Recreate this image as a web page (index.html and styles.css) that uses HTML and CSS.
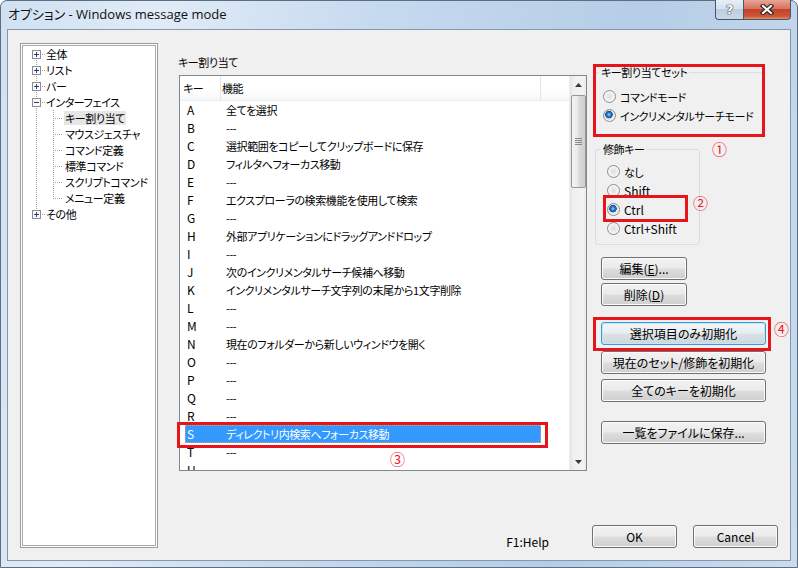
FILE: index.html
```html
<!doctype html>

<html lang="ja">
<head>
  <meta charset="utf-8">

  <title>オプション - Windows message mode</title>

  <link rel="stylesheet" href="styles.css">
</head>

<body>
  <div class="window">
    <div class="titlebar">
      <span class="title">オプション - Windows message mode</span>
      <div class="caption">
        <div class="cap cap-help"><span>?</span></div>
        <div class="cap cap-close">
          <svg width="14" height="11" viewBox="0 0 14 11">
            <path d="M3 2L11 9M11 2L3 9" stroke="#2b2b2b" stroke-width="4.4" stroke-linecap="square" fill="none"/>
            <path d="M3 2L11 9M11 2L3 9" stroke="#fff" stroke-width="2" stroke-linecap="square" fill="none"/>
          </svg>
        </div>
      </div>
    </div>

    <div class="client">
      <div class="tree">
        <div class="tree-body">
          <div class="node"><span class="g g-first"><svg class="box" width="9" height="9"><rect x="0.5" y="0.5" width="8" height="8" fill="#fafafa" stroke="#8e8e8e"/><path d="M2 4.5h5M4.5 2v5" stroke="#1f3f8f"/></svg></span><span class="label">全体</span></div>
          <div class="node"><span class="g g-mid"><svg class="box" width="9" height="9"><rect x="0.5" y="0.5" width="8" height="8" fill="#fafafa" stroke="#8e8e8e"/><path d="M2 4.5h5M4.5 2v5" stroke="#1f3f8f"/></svg></span><span class="label">リスト</span></div>
          <div class="node"><span class="g g-mid"><svg class="box" width="9" height="9"><rect x="0.5" y="0.5" width="8" height="8" fill="#fafafa" stroke="#8e8e8e"/><path d="M2 4.5h5M4.5 2v5" stroke="#1f3f8f"/></svg></span><span class="label">バー</span></div>
          <div class="node"><span class="g g-mid"><svg class="box" width="9" height="9"><rect x="0.5" y="0.5" width="8" height="8" fill="#fafafa" stroke="#8e8e8e"/><path d="M2 4.5h5" stroke="#1f3f8f"/></svg></span><span class="label">インターフェイス</span></div>
          <div class="node"><span class="g g-pass"></span><span class="g2 g2-mid"></span><span class="label selected">キー割り当て</span></div>
          <div class="node"><span class="g g-pass"></span><span class="g2 g2-mid"></span><span class="label">マウスジェスチャ</span></div>
          <div class="node"><span class="g g-pass"></span><span class="g2 g2-mid"></span><span class="label">コマンド定義</span></div>
          <div class="node"><span class="g g-pass"></span><span class="g2 g2-mid"></span><span class="label">標準コマンド</span></div>
          <div class="node"><span class="g g-pass"></span><span class="g2 g2-mid"></span><span class="label">スクリプトコマンド</span></div>
          <div class="node"><span class="g g-pass"></span><span class="g2 g2-last"></span><span class="label">メニュー定義</span></div>
          <div class="node"><span class="g g-last"><svg class="box" width="9" height="9"><rect x="0.5" y="0.5" width="8" height="8" fill="#fafafa" stroke="#8e8e8e"/><path d="M2 4.5h5M4.5 2v5" stroke="#1f3f8f"/></svg></span><span class="label">その他</span></div>
        </div>
      </div>

      <div class="content">
        <div class="top">
          <div class="main">
            <div class="section-label">キー割り当て</div>
            <div class="list">
              <div class="list-main">
                <div class="list-head">
                  <span class="th th-key">キー</span>
                  <span class="th th-func">機能</span>
                  <span class="th th-rest"></span>
                </div>
                <div class="rows">
                  <div class="row"><span class="key">A</span><span>全てを選択</span></div>
                  <div class="row"><span class="key">B</span><span>---</span></div>
                  <div class="row"><span class="key">C</span><span>選択範囲をコピーしてクリップボードに保存</span></div>
                  <div class="row"><span class="key">D</span><span>フィルタへフォーカス移動</span></div>
                  <div class="row"><span class="key">E</span><span>---</span></div>
                  <div class="row"><span class="key">F</span><span>エクスプローラの検索機能を使用して検索</span></div>
                  <div class="row"><span class="key">G</span><span>---</span></div>
                  <div class="row"><span class="key">H</span><span>外部アプリケーションにドラッグアンドドロップ</span></div>
                  <div class="row"><span class="key">I</span><span>---</span></div>
                  <div class="row"><span class="key">J</span><span>次のインクリメンタルサーチ候補へ移動</span></div>
                  <div class="row"><span class="key">K</span><span>インクリメンタルサーチ文字列の末尾から1文字削除</span></div>
                  <div class="row"><span class="key">L</span><span>---</span></div>
                  <div class="row"><span class="key">M</span><span>---</span></div>
                  <div class="row"><span class="key">N</span><span>現在のフォルダーから新しいウィンドウを開く</span></div>
                  <div class="row"><span class="key">O</span><span>---</span></div>
                  <div class="row"><span class="key">P</span><span>---</span></div>
                  <div class="row"><span class="key">Q</span><span>---</span></div>
                  <div class="row"><span class="key">R</span><span>---</span></div>
                  <div class="row sel"><span class="key">S</span><span>ディレクトリ内検索へフォーカス移動</span></div>
                  <div class="row"><span class="key">T</span><span>---</span></div>
                  <div class="row"><span class="key">U</span></div>
                </div>
              </div>
              <div class="scrollbar">
                <div class="sb-btn"><svg width="7" height="4"><path d="M3.5 0L7 4H0z" fill="#3a3a3a"/></svg></div>
                <div class="sb-thumb">
                  <svg width="7" height="7"><path d="M0 0.5h7M0 2.5h7M0 4.5h7M0 6.5h7" stroke="#8a8a8a"/></svg>
                </div>
                <div class="sb-track"></div>
                <div class="sb-btn"><svg width="7" height="4"><path d="M0 0H7L3.5 4z" fill="#3a3a3a"/></svg></div>
              </div>
            </div>
          </div>

          <div class="side">
            <fieldset class="group group-set">
              <legend>キー割り当てセット</legend>
              <label class="opt"><span class="radio"></span>コマンドモード</label>
              <label class="opt"><span class="radio on"></span>インクリメンタルサーチモード</label>
            </fieldset>

            <fieldset class="group group-mod">
              <legend>修飾キー</legend>
              <label class="opt"><span class="radio"></span>なし</label>
              <label class="opt latin"><span class="radio"></span>Shift</label>
              <label class="opt latin"><span class="radio on"></span>Ctrl</label>
              <label class="opt latin"><span class="radio"></span>Ctrl+Shift</label>
            </fieldset>

            <button class="btn btn-small btn-edit">編集(<u>E</u>)...</button>
            <button class="btn btn-small btn-del">削除(<u>D</u>)</button>
            <button class="btn btn-wide btn-reset focused">選択項目のみ初期化</button>
            <button class="btn btn-wide btn-cur">現在のセット/修飾を初期化</button>
            <button class="btn btn-wide btn-all">全てのキーを初期化</button>
            <button class="btn btn-wide btn-save">一覧をファイルに保存...</button>
          </div>
        </div>

        <div class="footer">
          <span class="help-hint latin">F1:Help</span>
          <button class="btn btn-ok">OK</button>
          <button class="btn btn-cancel">Cancel</button>
        </div>
      </div>
    </div>

    <div class="mark mark-set"></div>
    <div class="mark mark-ctrl"></div>
    <div class="mark mark-row"></div>
    <div class="mark mark-reset"></div>
    <span class="num num-1">①</span>
    <span class="num num-2">②</span>
    <span class="num num-3">③</span>
    <span class="num num-4">④</span>
  </div>
</body>
</html>
```

FILE: styles.css
```css
* {
  box-sizing: border-box;
}

body {
  margin: 0;
  background: #fff;
  font-family: "Noto Sans CJK JP", sans-serif;
  font-size: 11px;
  letter-spacing: -0.4px;
  font-feature-settings: "palt";
  color: #000;
}

.latin {
  font-size: 12px;
  letter-spacing: 0;
}

.window {
  --dot-v: repeating-linear-gradient(to bottom, #a0a0a0 0 1px, transparent 1px 2px);
  --dot-h: repeating-linear-gradient(to right, #a0a0a0 0 1px, transparent 1px 2px);
  position: relative;
  width: 798px;
  height: 568px;
  border: 1px solid #5f6d7c;
  border-radius: 7px 7px 0 0;
  background: linear-gradient(100deg, #d0e1f2 0%, #e0ebf7 18%, #c6daef 42%, #b5cde7 72%, #c9dcf0 100%);
  display: flex;
  flex-direction: column;
}

/* title bar */

.titlebar {
  height: 28px;
  display: flex;
  align-items: flex-start;
  flex: none;
}

.title {
  padding-left: 7px;
  line-height: 27px;
  font-family: "Open Sans", "Noto Sans CJK JP", sans-serif;
  font-size: 13px;
  letter-spacing: 0;
  color: #101010;
}

.caption {
  margin-left: auto;
  margin-right: 6px;
  margin-top: -1px;
  display: flex;
}

.cap {
  height: 20px;
  border: 1px solid #4a5664;
  border-top: none;
  display: flex;
  align-items: center;
  justify-content: center;
}

.cap-help {
  width: 28px;
  border-right: none;
  border-radius: 0 0 0 4px;
  background: linear-gradient(#e7eef7, #d6e2ef 45%, #bccde0 50%, #c9d9ea);
}

.cap-help span {
  font-family: "DejaVu Sans", sans-serif;
  font-weight: bold;
  font-size: 13px;
  line-height: 18px;
  color: #fff;
  text-shadow: 0 0 1px #333, 0 0 1px #333, 0 0 1px #333;
}

.cap-close {
  width: 48px;
  border-radius: 0 0 4px 0;
  background: linear-gradient(#e8a597, #d8735f 45%, #c3432a 50%, #cc5537 85%, #e08e6e);
}

/* client area */

.client {
  margin: 0 6px;
  height: 532px;
  border: 1px solid #8597aa;
  background: #f0f0f0;
  display: flex;
  padding: 13px 0 0 12px;
}

.tree {
  width: 138px;
  height: 505px;
  flex: none;
  border: 1px solid #9c9c9c;
  padding: 1px;
  background: #fff;
}

.tree-body {
  height: 100%;
  border: 1px solid #a9a9a9;
  background: #fff;
  padding-left: 5px;
}

.node {
  display: flex;
  height: 16px;
  white-space: nowrap;
}

.g {
  flex: none;
  width: 17px;
  height: 16px;
}

.g2 {
  flex: none;
  width: 19px;
  height: 16px;
}

.g-first {
  background: var(--dot-v) 8px 8px / 1px 8px no-repeat, var(--dot-h) 8px 8px / 9px 1px no-repeat;
}

.g-mid {
  background: var(--dot-v) 8px 0 / 1px 16px no-repeat, var(--dot-h) 8px 8px / 9px 1px no-repeat;
}

.g-last {
  background: var(--dot-v) 8px 0 / 1px 9px no-repeat, var(--dot-h) 8px 8px / 9px 1px no-repeat;
}

.g-pass {
  background: var(--dot-v) 8px 0 / 1px 16px no-repeat;
}

.g2-mid {
  background: var(--dot-v) 8px 0 / 1px 16px no-repeat, var(--dot-h) 8px 8px / 10px 1px no-repeat;
}

.g2-last {
  background: var(--dot-v) 8px 0 / 1px 9px no-repeat, var(--dot-h) 8px 8px / 10px 1px no-repeat;
}

.box {
  display: block;
  margin: 4px 0 0 4px;
}

.label {
  height: 14px;
  line-height: 14px;
  margin-top: 1px;
  padding: 0 1px;
}

.label.selected {
  background: #e6e6e6;
}

.content {
  flex: 1;
  display: flex;
  flex-direction: column;
}

.top {
  display: flex;
  align-items: flex-start;
}

/* key list */

.main {
  margin-left: 20px;
  width: 409px;
  flex: none;
}

.section-label {
  margin-top: 12px;
  height: 14px;
  line-height: 14px;
  margin-bottom: 6px;
}

.list {
  margin-left: 1px;
  width: 408px;
  height: 396px;
  border: 1px solid #828790;
  background: #fff;
  display: flex;
}

.list-main {
  flex: 1;
  display: flex;
  flex-direction: column;
  overflow: hidden;
}

.list-head {
  display: flex;
  height: 25px;
  flex: none;
  background: linear-gradient(#fff, #fff 55%, #f6f7f9);
  border-bottom: 1px solid #eceef1;
}

.th {
  line-height: 24px;
  border-right: 1px solid #e3e5e8;
}

.th-key {
  width: 41px;
  padding-left: 3px;
}

.th-func {
  width: 320px;
  padding-left: 1px;
}

.th-rest {
  flex: 1;
  border-right: none;
}

.rows {
  flex: 1;
  overflow: hidden;
}

.row {
  display: flex;
  height: 18px;
  line-height: 18px;
  margin-left: 5px;
  width: 356px;
  white-space: nowrap;
}

.key {
  width: 41px;
  padding-left: 2px;
  flex: none;
  font-size: 12px;
  letter-spacing: 0;
}

.row.sel {
  background: #3399ff;
  color: #fff;
  outline: 1px dotted #e3a463;
  outline-offset: -1px;
}

.scrollbar {
  width: 17px;
  flex: none;
  display: flex;
  flex-direction: column;
  align-items: center;
  background: linear-gradient(to right, #e4e4e4, #efefef 20%, #f4f4f4 80%, #eaeaea);
  border-left: 1px solid #ededed;
}

.sb-btn {
  width: 16px;
  height: 17px;
  display: flex;
  align-items: center;
  justify-content: center;
}

.sb-thumb {
  margin-top: 2px;
  width: 15px;
  height: 93px;
  border: 1px solid #979797;
  border-radius: 2px;
  background: linear-gradient(to right, #f4f4f4, #e9e9e9 45%, #d9d9d9 55%, #d0d0d0);
  display: flex;
  align-items: center;
  justify-content: center;
}

.sb-track {
  flex: 1;
}

/* right side */

.side {
  margin-left: 8px;
  width: 195px;
  flex: none;
  display: flex;
  flex-direction: column;
  align-items: flex-start;
}

.group {
  margin: 0;
  border: 1px solid #d5dfe5;
  border-radius: 3px;
  min-width: 0;
}

.group legend {
  padding: 0 2px;
  line-height: 14px;
}

.group-set {
  margin-top: 22px;
  width: 168px;
  padding: 8px 0 9px 3px;
}

.group-set .opt {
  margin-left: 4px;
}

.group-mod {
  margin-top: 7px;
  width: 105px;
  padding: 6px 0 6px 5px;
}

.group-mod .opt {
  margin-left: 6px;
}

.opt {
  display: flex;
  align-items: center;
  gap: 4px;
  height: 19px;
  white-space: nowrap;
}

.radio {
  width: 13px;
  height: 13px;
  flex: none;
  border-radius: 50%;
  border: 1px solid #8b8c8c;
  background: radial-gradient(circle, #dcdcdc 0, #ececec 3px, #fafafa 6px);
}

.radio.on {
  background: radial-gradient(circle at 45% 42%, #a9dcff 0, #3a8ad8 1.5px, #0d4f98 3.5px, #dedede 4px, #f6f6f6 6px);
}

.btn {
  font: inherit;
  font-size: 12px;
  letter-spacing: 0;
  height: 23px;
  padding: 0;
  border: 1px solid #707070;
  border-radius: 3px;
  background: linear-gradient(#f2f2f2, #ebebeb 48%, #dddddd 52%, #cfcfcf);
  box-shadow: inset 0 0 0 1px #fbfbfb;
  color: #000;
  line-height: 20px;
  white-space: nowrap;
}

.btn.focused {
  border-color: #3c9ad8;
  box-shadow: inset 0 0 0 1px #bfe7fc;
  background: linear-gradient(#f1f5f8, #e9eef2 48%, #dbe1e6 52%, #ced6dc);
}

.btn-small {
  width: 86px;
  margin-left: 6px;
}

.btn-wide {
  width: 165px;
  margin-left: 6px;
}

.btn-edit {
  margin-top: 12px;
}

.btn-del {
  margin-top: 3px;
}

.btn-reset {
  margin-top: 16px;
}

.btn-cur {
  margin-top: 6px;
}

.btn-all {
  margin-top: 5px;
}

.btn-save {
  margin-top: 19px;
}

/* footer */

.footer {
  margin-top: auto;
  margin-bottom: 12px;
  display: flex;
  justify-content: flex-end;
  align-items: flex-end;
}

.help-hint {
  margin-right: 43px;
  line-height: 14px;
  margin-bottom: -1px;
}

.btn-ok {
  width: 85px;
  margin-right: 16px;
}

.btn-cancel {
  width: 85px;
  margin-right: 12px;
}

/* annotations drawn over the dialog */

.mark {
  position: absolute;
  border: 3px solid #e8141c;
}

.mark-set {
  left: 592px;
  top: 63px;
  width: 172px;
  height: 73px;
}

.mark-ctrl {
  left: 602px;
  top: 194px;
  width: 85px;
  height: 27px;
}

.mark-row {
  left: 176px;
  top: 421px;
  width: 371px;
  height: 26px;
}

.mark-reset {
  left: 592px;
  top: 316px;
  width: 178px;
  height: 34px;
}

.num {
  position: absolute;
  width: 15px;
  height: 15px;
  line-height: 15px;
  font-size: 15px;
  letter-spacing: 0;
  text-align: center;
  color: #f0202a;
}

.num-1 {
  left: 711px;
  top: 140px;
}

.num-2 {
  left: 692px;
  top: 194px;
}

.num-3 {
  left: 389px;
  top: 450px;
}

.num-4 {
  left: 773px;
  top: 320px;
}
```
